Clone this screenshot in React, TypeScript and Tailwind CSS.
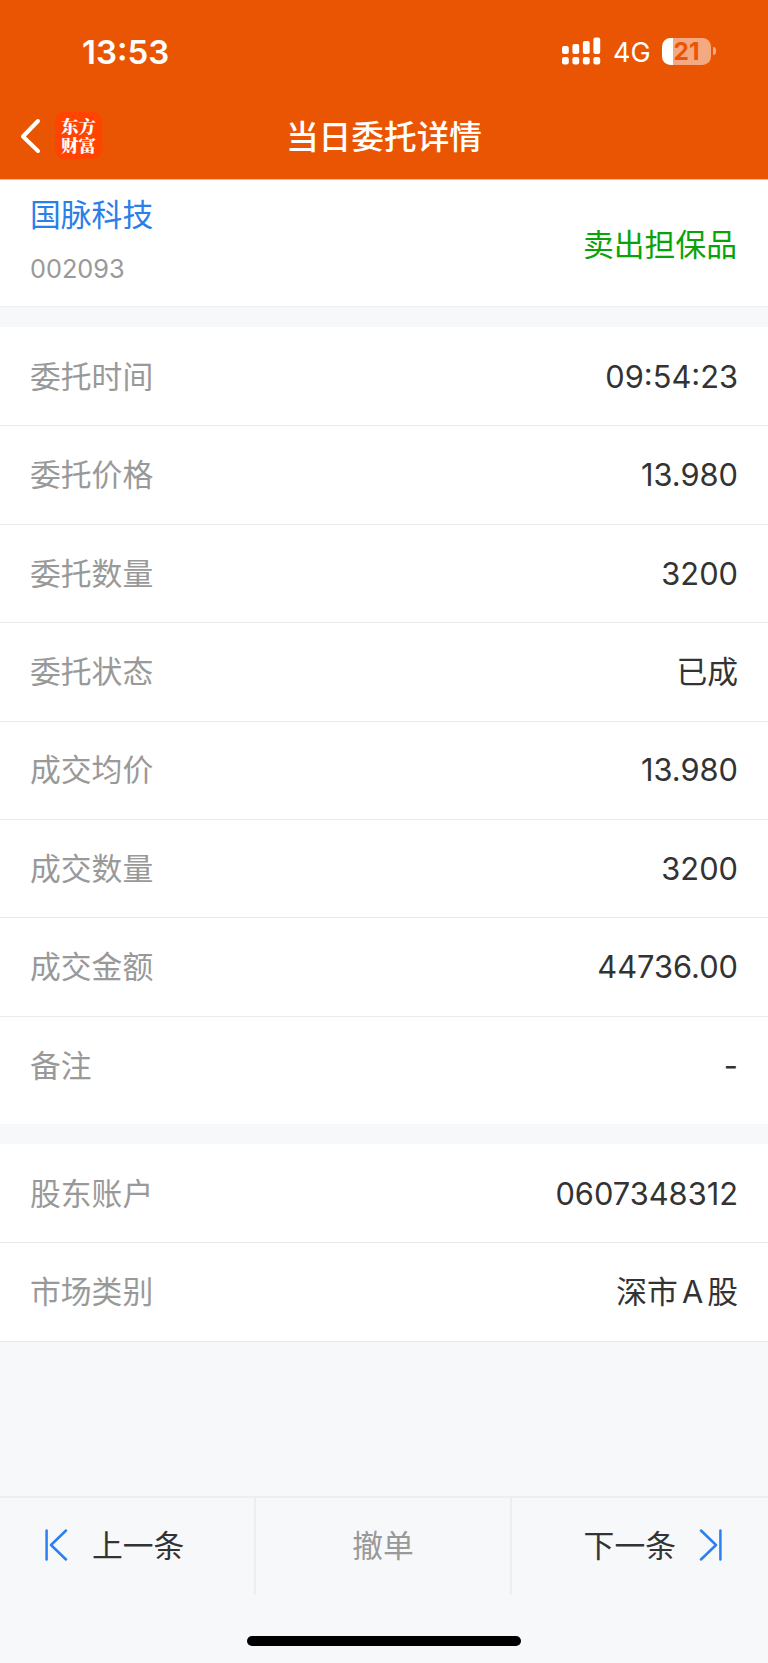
import { clsx } from "clsx";

interface Field {
  label: string;
  value: string;
}

const orderFields: Field[] = [
  { label: "委托时间", value: "09:54:23" },
  { label: "委托价格", value: "13.980" },
  { label: "委托数量", value: "3200" },
  { label: "委托状态", value: "已成" },
  { label: "成交均价", value: "13.980" },
  { label: "成交数量", value: "3200" },
  { label: "成交金额", value: "44736.00" },
  { label: "备注", value: "-" },
];

const accountFields: Field[] = [
  { label: "股东账户", value: "0607348312" },
  { label: "市场类别", value: "深市 A 股" },
];

function StatusBar() {
  return (
    <div className="flex h-[102px] items-center justify-between pl-[82px] pr-[52px]">
      <span className="pt-[2px] text-[33px] font-semibold leading-none">13:53</span>
      <div className="flex items-center">
        <svg width="39" height="28" viewBox="0 0 39 28" fill="currentColor">
          <rect x="0" y="9" width="6.8" height="8" rx="2" />
          <rect x="10.4" y="7" width="6.8" height="10" rx="2" />
          <rect x="20.9" y="4" width="6.8" height="13" rx="2" />
          <rect x="31.4" y="0.5" width="6.8" height="16.5" rx="2" />
          <rect x="0" y="20" width="6.8" height="7.5" rx="2.2" />
          <rect x="10.4" y="20" width="6.8" height="7.5" rx="2.2" />
          <rect x="20.9" y="20" width="6.8" height="7.5" rx="2.2" />
          <rect x="31.4" y="20" width="6.8" height="7.5" rx="2.2" />
        </svg>
        <span className="ml-3 w-[38px] pt-[2px] text-[27px] leading-none">4G</span>
        <div className="ml-[11px] flex items-center">
          <div className="flex h-[27px] w-[49px] items-center justify-center rounded-[8.5px] bg-linear-to-r from-white from-[22%] to-[#f4a980] to-[22%] text-[24.5px] font-bold leading-[27px] text-[#ea5504]">
            21
          </div>
          <div className="ml-[2px] h-[8px] w-[3px] rounded-r-full bg-[#f4a980]" />
        </div>
      </div>
    </div>
  );
}

function TitleBar() {
  return (
    <div className="grid h-[77px] grid-cols-[1fr_auto_1fr] items-start pt-[10px]">
      <div className="flex items-center pl-5">
        <svg width="22" height="36" viewBox="0 0 22 36" fill="none" stroke="currentColor" strokeWidth="4" strokeLinecap="round" strokeLinejoin="round">
          <path d="M18 3 3 18.5 18 33" />
        </svg>
        <div className="ml-[13px] flex size-[47px] flex-col items-center justify-center rounded-[9px] bg-[#ff4400] pb-[2px] font-['Noto_Serif_CJK_SC','Noto_Sans_CJK_SC',serif] text-[17.5px] font-black leading-[19px]">
          <span>东方</span>
          <span>财富</span>
        </div>
      </div>
      <h1 className="pt-px text-[32.7px] font-medium leading-[48px]">当日委托详情</h1>
    </div>
  );
}

function FieldRow({ label, value, last }: Field & { last?: boolean }) {
  return (
    <div
      className={clsx(
        "flex h-[98.4px] items-center justify-between px-[30px] pt-[0.5px] text-[30.8px]",
        !last && "border-b border-[#ebebed]"
      )}
    >
      <span className="text-[#999999]">{label}</span>
      <span className="text-[#333333] [word-spacing:-4.6px]">{value}</span>
    </div>
  );
}

function StepIcon({ flip }: { flip?: boolean }) {
  return (
    <svg
      width="24"
      height="32"
      viewBox="0 0 24 32"
      fill="none"
      stroke="#2b7ff0"
      strokeWidth="2.5"
      strokeLinecap="round"
      strokeLinejoin="round"
      className={clsx("mb-[3px]", flip && "-scale-x-100")}
    >
      <path d="M2.6 1.5v29M22 1.5 7 16l15 14.5" />
    </svg>
  );
}

export default function App() {
  return (
    <div className="flex h-[1663px] w-[768px] flex-col bg-[#f7f8fa] font-[Inter,'Noto_Sans_CJK_SC',sans-serif]">
      <header className="h-[180px] shrink-0 border-b border-[#f7bb9b] bg-[#ea5504] text-white">
        <StatusBar />
        <TitleBar />
      </header>

      <section className="flex h-[127px] shrink-0 items-center justify-between border-b border-[#f1f1f2] bg-white px-[30px]">
        <div className="pb-[7px]">
          <div className="text-[30.8px] leading-[46px] text-[#2b7fe8]">国脉科技</div>
          <div className="mt-3 text-[25.3px] leading-[38px] text-[#999999]">002093</div>
        </div>
        <span className="pr-px pt-[3px] text-[30.8px] leading-[46px] text-[#09a309]">卖出担保品</span>
      </section>

      <section className="mt-5 h-[797px] shrink-0 bg-white pt-px">
        {orderFields.map((field, index) => (
          <FieldRow key={field.label} {...field} last={index === orderFields.length - 1} />
        ))}
      </section>

      <section className="mt-5 shrink-0 bg-white pt-px">
        {accountFields.map((field) => (
          <FieldRow key={field.label} {...field} />
        ))}
      </section>

      <footer className="mt-auto flex h-[167px] shrink-0 flex-col border-t-2 border-[#eeeeef]">
        <div className="grid h-[97px] grid-cols-3 divide-x-2 divide-[#eeeeef] text-[30.8px] text-[#333333]">
          <button className="flex items-center pl-[44px]">
            <StepIcon />
            <span className="ml-[24px]">上一条</span>
          </button>
          <button className="text-[#999999]" disabled>
            撤单
          </button>
          <button className="flex items-center justify-end pr-[45px]">
            <span className="mr-[23px]">下一条</span>
            <StepIcon flip />
          </button>
        </div>
        <div className="mx-auto mt-[41px] h-[10px] w-[274px] rounded-full bg-black" />
      </footer>
    </div>
  );
}
